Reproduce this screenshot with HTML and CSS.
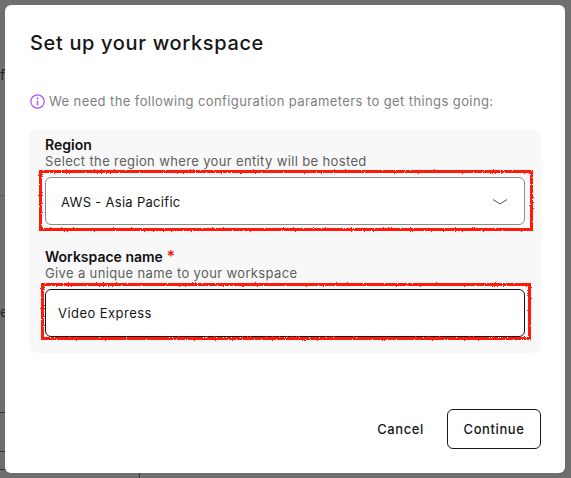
FILE: index.html
```html
<!DOCTYPE html>
<html lang="en">
<head>
  <meta charset="utf-8">
  <title>Set up your workspace</title>
  <link rel="stylesheet" href="styles.css">
</head>
<body>
  <!-- bits of the page behind the backdrop -->
  <span class="behind behind-f">f</span>
  <span class="behind behind-e">e</span>
  <div class="behind line line-a"></div>
  <div class="behind line line-b"></div>
  <div class="behind line line-c"></div>
  <div class="behind line line-d"></div>
  <div class="behind line line-e"></div>

  <svg class="filters" width="0" height="0">
    <filter id="rough" x="-5%" y="-20%" width="110%" height="140%" color-interpolation-filters="sRGB">
      <feTurbulence type="fractalNoise" baseFrequency="0.9" numOctaves="2" seed="4"/>
      <feDisplacementMap in="SourceGraphic" scale="2.5"/>
    </filter>
  </svg>

  <div class="modal">
    <h1 class="title">Set up your workspace</h1>

    <p class="info">
      <svg class="info-icon" viewBox="0 0 16 16" width="15" height="15">
        <circle cx="8" cy="8" r="7.1" fill="none" stroke="#a855f7" stroke-width="1.3"/>
        <circle cx="8" cy="4.8" r="1" fill="#a855f7"/>
        <path d="M8 7.2v4.8" fill="none" stroke="#a855f7" stroke-width="1.5"/>
      </svg>
      We need the following configuration parameters to get things going:
    </p>

    <div class="panel">
      <div class="field">
        <div class="label">Region</div>
        <div class="hint">Select the region where your entity will be hosted</div>
        <div class="select">
          AWS - Asia Pacific
          <svg class="chevron" viewBox="0 0 16 8" width="16" height="8">
            <path d="M1 1.5l7 4.5 7-4.5" fill="none" stroke="#555" stroke-width="1"/>
          </svg>
        </div>
        <div class="mark mark-region"></div>
      </div>

      <div class="field">
        <div class="label">Workspace name <span class="required">*</span></div>
        <div class="hint">Give a unique name to your workspace</div>
        <div class="input">Video Express</div>
        <div class="mark mark-name"></div>
      </div>
    </div>

    <div class="actions">
      <button class="btn btn-plain">Cancel</button>
      <button class="btn btn-outline">Continue</button>
    </div>
  </div>
</body>
</html>
```

FILE: styles.css
```css
* {
  box-sizing: border-box;
}
html, body {
  height: 100%;
}
body {
  margin: 0;
  padding: 5px 6px 5px 5px;
  background-color: #6f6f6f;
  font-family: "Inter", "Liberation Sans", sans-serif;
  overflow: hidden;
  position: relative;
}
.behind {
  position: absolute;
}
.behind-f, .behind-e {
  left: 0;
  font-size: 14px;
  line-height: 16px;
  color: #222;
}
.behind-f {
  top: 67px;
}
.behind-e {
  top: 304px;
}
.line {
  background-color: #333;
}
.line-a {
  left: 0;
  top: 195px;
  width: 5px;
  height: 1px;
  background-color: #5c5c5c;
}
.line-b {
  left: 0;
  top: 412px;
  width: 5px;
  height: 1px;
}
.line-c {
  left: 0;
  top: 451px;
  width: 5px;
  height: 1px;
}
.line-d {
  left: 0;
  top: 469px;
  width: 5px;
  height: 1px;
}
.line-e {
  left: 139px;
  top: 473px;
  width: 1px;
  height: 5px;
}
.filters {
  position: absolute;
}
.modal {
  position: relative;
  display: flex;
  flex-direction: column;
  height: 468px;
  padding: 24px;
  background-color: #fff;
  border-radius: 6px;
}
.title {
  margin: 0;
  padding-left: 1px;
  font-size: 20px;
  line-height: 28px;
  font-weight: 500;
  letter-spacing: 0.65px;
  color: #161616;
}
.info {
  display: flex;
  align-items: center;
  gap: 4px;
  margin: 34px 0 0 1px;
  font-size: 13px;
  line-height: 20px;
  letter-spacing: 0.4px;
  color: #808080;
}
.info-icon {
  flex: none;
}
.panel {
  display: flex;
  flex-direction: column;
  gap: 24px;
  margin-top: 18px;
  padding: 8px 16px 16px;
  background-color: #f8f8f8;
  border-radius: 8px;
}
.field {
  position: relative;
}
.label {
  font-size: 14px;
  line-height: 16px;
  font-weight: 600;
  color: #111;
}
.required {
  color: #f01c1c;
  font-size: 16px;
  line-height: 14px;
}
.hint {
  margin-bottom: 8px;
  font-size: 13px;
  line-height: 16px;
  letter-spacing: 0.36px;
  color: #5e5e5e;
}
.select, .input {
  display: flex;
  align-items: center;
  justify-content: space-between;
  height: 48px;
  background-color: #fff;
  border-radius: 6px;
  font-size: 13px;
  color: #161616;
}
.select {
  padding: 2px 16px 0 15px;
  border: 1px solid #8c8c8c;
  letter-spacing: 0.3px;
}
.input {
  padding: 0 12px;
  border: 1px solid #111;
  letter-spacing: 0.45px;
}
.chevron {
  flex: none;
}
.mark {
  position: absolute;
  border: 3px solid #ff1a0a;
  filter: url(#rough);
  pointer-events: none;
}
.mark-region {
  left: -6px;
  right: -8px;
  top: 33px;
  height: 61px;
}
.mark-name {
  left: -4px;
  right: -6px;
  top: 34px;
  height: 57px;
}
.actions {
  display: flex;
  justify-content: flex-end;
  align-items: center;
  gap: 7px;
  margin-top: auto;
}
.btn {
  height: 40px;
  border-radius: 6px;
  background: none;
  font-family: inherit;
  font-size: 13px;
  font-weight: 500;
  letter-spacing: 0.6px;
  color: #161616;
}
.btn-plain {
  padding: 0 16px;
  border: none;
}
.btn-outline {
  width: 94px;
  padding: 0;
  border: 1px solid #161616;
}
```
